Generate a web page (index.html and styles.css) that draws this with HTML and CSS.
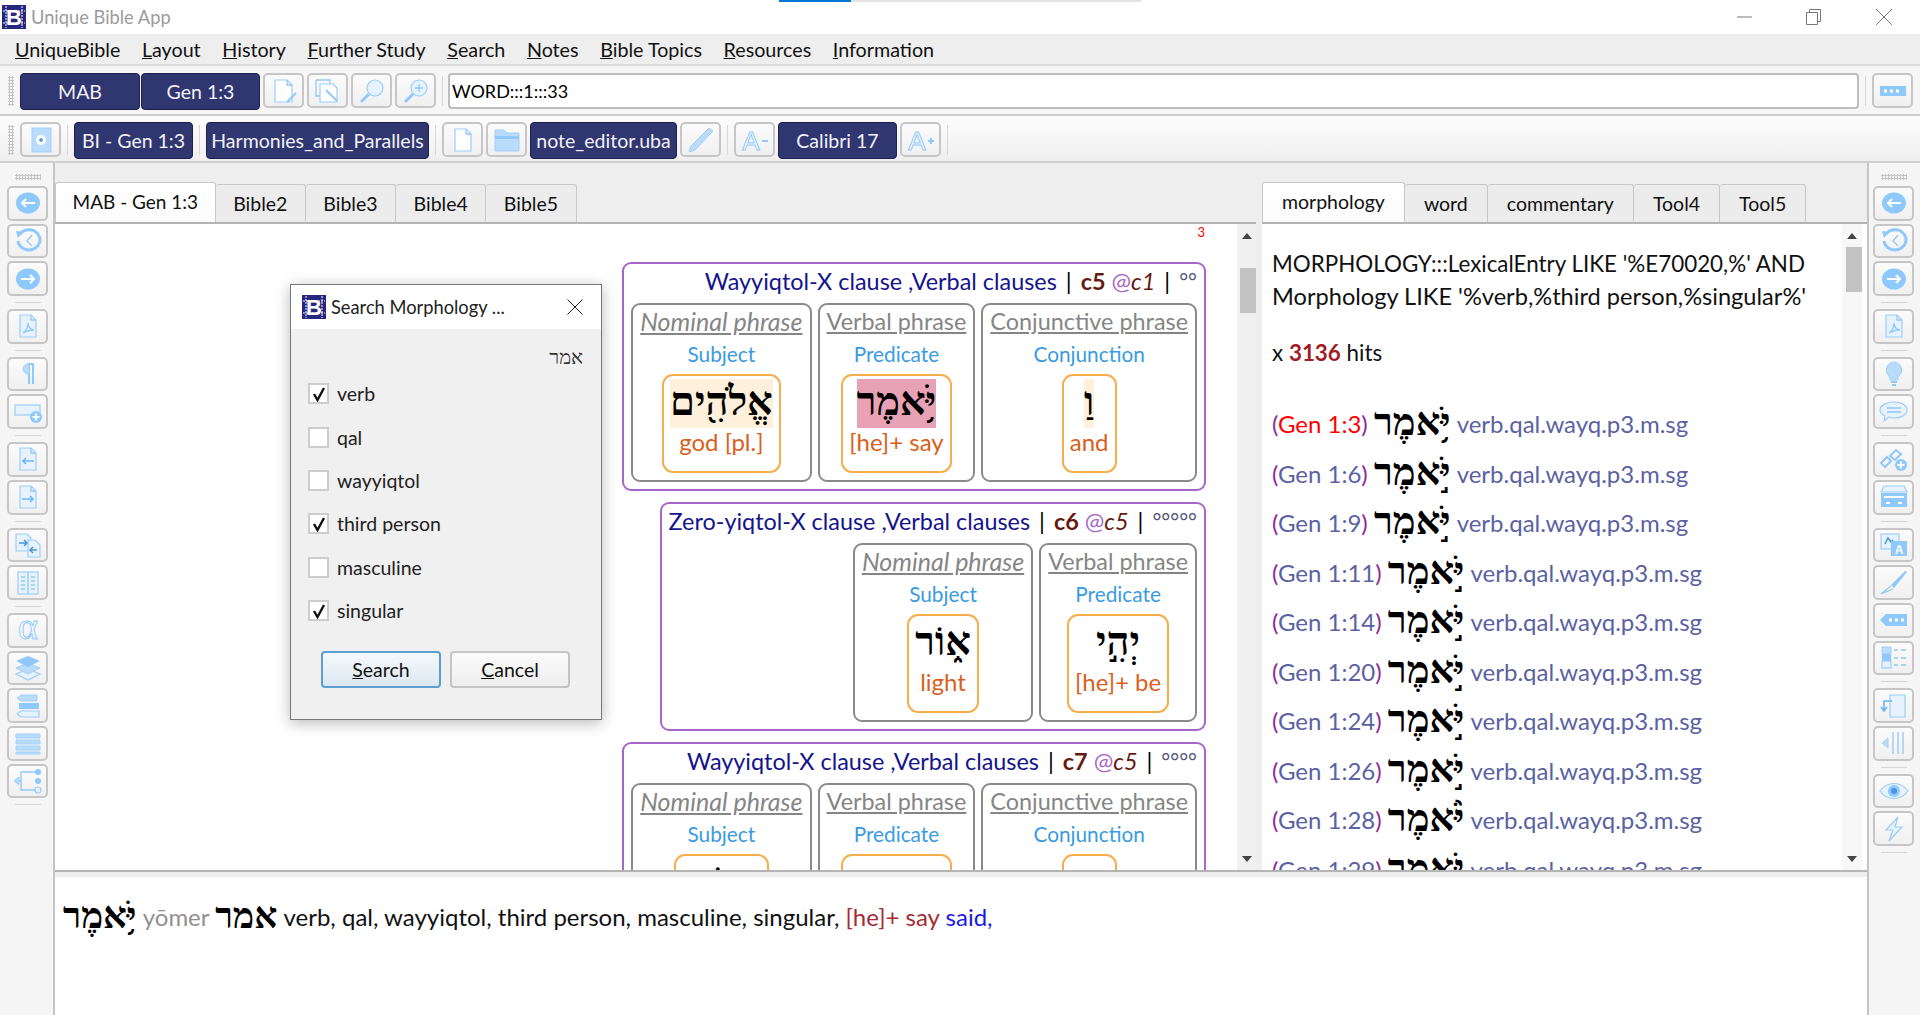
FILE: index.html
```html
<!DOCTYPE html>
<html>
<head>
<meta charset="utf-8">
<title>Unique Bible App</title>
<link rel="stylesheet" href="styles.css">
</head>
<body>

<svg class="defs" width="0" height="0">
  <symbol id="i-back" viewBox="0 0 30 26"><ellipse class="so" cx="15" cy="13" rx="12" ry="10.5"/><path class="wh" d="M22 13H9M13 9l-4 4 4 4"/></symbol>
  <symbol id="i-next" viewBox="0 0 30 26"><ellipse class="so" cx="15" cy="13" rx="12" ry="10.5"/><path class="wh" d="M8 13h13M17 9l4 4-4 4"/></symbol>
  <symbol id="i-hist" viewBox="0 0 30 26"><path class="th" d="M7 6a11 10 0 1 1-2 7"/><path class="so" d="M3 3l7 1-5 6z"/><path class="ln" d="M19 7l-5 6 5 5"/></symbol>
  <symbol id="i-pdf" viewBox="0 0 30 26"><path class="pl" d="M7 2h11l5 5v17H7z"/><path class="ln" d="M18 2v5h5M10 20c3-2 5-6 5-10 0 4 3 7 6 7-4 0-8 1-11 3z"/></symbol>
  <symbol id="i-para" viewBox="0 0 30 26"><path class="th2" d="M14 3h7M16 3v20M20 3v20"/><path class="lt" d="M16 3c-8 0-8 10 0 10z"/></symbol>
  <symbol id="i-boxadd" viewBox="0 0 30 26"><rect class="pl" x="2" y="6" width="25" height="10"/><circle class="so" cx="23" cy="18" r="6"/><path class="wh" d="M19.500 18h7M23 14.500v7"/></symbol>
  <symbol id="i-docback" viewBox="0 0 30 26"><path class="pl" d="M7 2h11l5 5v17H7z"/><path class="ln" d="M18 2v5h5"/><path class="ar" d="M21 15H10M13 12l-3 3 3 3"/></symbol>
  <symbol id="i-docnext" viewBox="0 0 30 26"><path class="pl" d="M7 2h11l5 5v17H7z"/><path class="ln" d="M18 2v5h5"/><path class="ar" d="M9 15h11M17 12l3 3-3 3"/></symbol>
  <symbol id="i-docs" viewBox="0 0 30 26"><path class="pl" d="M3 2h11l4 4v13H3z"/><path class="pl" d="M15 8h7l5 5v12H15z"/><path class="dk" d="M6 11h8M11 8l3 3-3 3M24 18h-7M20 15l-3 3 3 3"/></symbol>
  <symbol id="i-cols" viewBox="0 0 30 26"><rect class="pl" x="5" y="2" width="20" height="22"/><path class="ln" d="M15 2v22M8 7h4M8 11h4M8 15h4M8 19h4M18 7h4M18 11h4M18 15h4M18 19h4"/></symbol>
  <symbol id="i-alpha" viewBox="0 0 30 26"><text class="alpha" x="15" y="22">α</text></symbol>
  <symbol id="i-layers" viewBox="0 0 30 26"><path class="pl" d="M15 14l12 5-12 6-12-6z"/><path class="lt" d="M15 8l12 5-12 6-12-6z"/><path class="so" d="M15 1l12 5-12 6-12-6z"/></symbol>
  <symbol id="i-stack" viewBox="0 0 30 26"><path class="lt" d="M8 2h16v6H8L4 5z"/><path class="so" d="M6 10h20v6H6z"/><path class="pl" d="M8 18h18v6H8l-4-3z"/></symbol>
  <symbol id="i-bars" viewBox="0 0 30 26"><path class="lt" d="M3 4h24v4H3zM3 10h24v4H3zM3 16h24v4H3zM3 22h24v2H3z"/></symbol>
  <symbol id="i-tree" viewBox="0 0 30 26"><path class="ln" d="M10 4H8v18h2M8 4h16M8 22h16M8 13H5"/><path class="lt" d="M1 13l5-4v8z"/><circle class="so" cx="25" cy="4" r="3"/><circle class="so" cx="25" cy="13" r="3"/><circle class="pl" cx="25" cy="22" r="3"/></symbol>
  <symbol id="i-bulb" viewBox="0 0 30 26"><path class="lt" d="M15 1a8 8 0 0 1 5 14c-1 1-1 3-1 4h-8c0-1 0-3-1-4a8 8 0 0 1 5-14z"/><path class="th2" d="M12 21h6M13 24h4"/></symbol>
  <symbol id="i-chat" viewBox="0 0 30 26"><path class="pl" d="M15 3c7 0 13 3 13 8s-6 8-13 8c-2 0-3 0-5-1l-5 4 1-5c-3-1-5-4-5-6 0-5 7-8 14-8z"/><path class="ln" d="M8 9h14M8 13h14"/></symbol>
  <symbol id="i-chain" viewBox="0 0 30 26"><path class="th2" d="M2 17l6-6 4 4-6 6zM11 10l6-6 5 4-6 6z"/><circle class="so" cx="22" cy="19" r="6"/><path class="wh" d="M18.500 19h7M22 15.500v7"/></symbol>
  <symbol id="i-box" viewBox="0 0 30 26"><path class="pl" d="M5 2h20l3 6H2z"/><path class="so" d="M2 9h26v14H2z"/><path class="wh" d="M5 13h20M7 19h4M19 19h4"/></symbol>
  <symbol id="i-pica" viewBox="0 0 30 26"><rect class="pl" x="2" y="2" width="18" height="15"/><path class="dk" d="M6 12l3-6 3 4 2-2"/><rect class="so" x="12" y="9" width="16" height="15"/><text class="label-a" x="20" y="22">A</text></symbol>
  <symbol id="i-scalpel" viewBox="0 0 30 26"><path class="so" d="M28 2l-2-1L12 15l3 3z"/><path class="ln" d="M12 16L2 24l12-5"/></symbol>
  <symbol id="i-tag" viewBox="0 0 30 26"><path class="so" d="M7 7h21v12H7l-6-6z"/><path class="dots" d="M10 13h16"/></symbol>
  <symbol id="i-list" viewBox="0 0 30 26"><rect class="lt" x="3" y="2" width="9" height="7"/><rect class="so" x="3" y="9" width="9" height="7"/><rect class="pl" x="3" y="16" width="9" height="7"/><path class="ln" d="M15 5h4M22 5h5M15 13h4M22 13h5M15 20h4M22 20h5"/></symbol>
  <symbol id="i-ret" viewBox="0 0 30 26"><path class="pl" d="M11 2h15v22H11z"/><path class="ar" d="M13 8H5v9M2 14l3 4 3-4"/></symbol>
  <symbol id="i-vlines" viewBox="0 0 30 26"><path class="ln" d="M14 2v22M19 2v22M24 2v22"/><path class="lt" d="M9 8v10l-6-5z"/></symbol>
  <symbol id="i-eye" viewBox="0 0 30 26"><path class="pl" d="M1 13c7-10 21-10 28 0-7 10-21 10-28 0z"/><circle class="so" cx="15" cy="13" r="6"/><circle class="blue" cx="15" cy="13" r="3"/></symbol>
  <symbol id="i-bolt" viewBox="0 0 30 26"><path class="pl" d="M19 1L7 14h7l-4 11 13-14h-7z"/></symbol>
  <symbol id="i-docedit" viewBox="0 0 30 26"><path class="pl fill-w" d="M6 2h12l5 5v17H6z"/><path class="ln" d="M18 2v5h5"/><path class="th2" d="M27 15l-9 9"/></symbol>
  <symbol id="i-copyedit" viewBox="0 0 30 26"><path class="ln" d="M3 2h14v4M3 2v16h4"/><path class="pl fill-w" d="M7 6h13l4 4v14H7z"/><path class="th2" d="M13 12l11 11"/></symbol>
  <symbol id="i-find" viewBox="0 0 30 26"><circle class="pl" cx="18" cy="10" r="8"/><path class="th" d="M12 16l-8 8"/></symbol>
  <symbol id="i-findplus" viewBox="0 0 30 26"><circle class="pl" cx="18" cy="10" r="8"/><path class="th" d="M12 16l-8 8"/><path class="ln" d="M14 10h8M18 6v8"/></symbol>
  <symbol id="i-term" viewBox="0 0 30 26"><rect class="so" x="2" y="8" width="26" height="10"/><path class="dots" d="M6 13h18"/></symbol>
  <symbol id="i-bookadd" viewBox="0 0 30 26"><rect class="lt" x="6" y="1" width="19" height="24"/><circle class="white" cx="15" cy="13" r="5"/><path class="dk" d="M13 13h4M15 11v4"/></symbol>
  <symbol id="i-doc" viewBox="0 0 30 26"><path class="pl fill-w" d="M7 2h11l5 5v17H7z"/><path class="ln" d="M18 2v5h5"/></symbol>
  <symbol id="i-folder" viewBox="0 0 30 26"><path class="lt" d="M3 3h9l3 3h12v18H3z"/><path class="so" d="M3 9h24v3H3z"/></symbol>
  <symbol id="i-pen" viewBox="0 0 30 26"><path class="lt" d="M23 1l4 3L9 23l-6 2 2-6z"/></symbol>
  <symbol id="i-aminus" viewBox="0 0 30 26"><text class="font-a" x="11" y="23">A</text><path class="th2" d="M22 14h6"/></symbol>
  <symbol id="i-aplus" viewBox="0 0 30 26"><text class="font-a" x="11" y="23">A</text><path class="th2" d="M22 14h6M25 11v6"/></symbol>
  <symbol id="i-logo" viewBox="0 0 24 24"><rect class="logo-bg" width="24" height="24"/><path class="logo-ln" d="M4 1v22M20 1v22M1 6h22M1 18h22"/><text class="logo-b" x="12" y="20">B</text></symbol>
</svg>

<div class="topstrip"><span></span></div>

<div class="titlebar">
  <svg class="logo"><use href="#i-logo"/></svg>
  <span class="apptitle">Unique Bible App</span>
  <div class="winbtns">
    <svg width="16" height="16" viewBox="0 0 16 16"><path d="M0 8h15"/></svg>
    <svg width="16" height="16" viewBox="0 0 16 16"><path d="M.5 3.500h11v12H.5zM3.500 3.500V.500h11v12h-3"/></svg>
    <svg width="18" height="16" viewBox="0 0 18 16"><path d="M1 0l16 16M17 0L1 16"/></svg>
  </div>
</div>

<div class="menubar">
  <span><u>U</u>niqueBible</span>
  <span><u>L</u>ayout</span>
  <span><u>H</u>istory</span>
  <span><u>F</u>urther Study</span>
  <span><u>S</u>earch</span>
  <span><u>N</u>otes</span>
  <span><u>B</u>ible Topics</span>
  <span><u>R</u>esources</span>
  <span><u>I</u>nformation</span>
</div>

<div class="toolbar tb-one">
  <div class="grip"></div>
  <div class="dark w-mab">MAB</div>
  <div class="dark w-ref tight">Gen 1:3</div>
  <div class="tbtn"><svg class="ic"><use href="#i-docedit"/></svg></div>
  <div class="tbtn"><svg class="ic"><use href="#i-copyedit"/></svg></div>
  <div class="tbtn"><svg class="ic"><use href="#i-find"/></svg></div>
  <div class="tbtn"><svg class="ic"><use href="#i-findplus"/></svg></div>
  <div class="tsep"></div>
  <div class="cmdline">WORD:::1:::33</div>
  <div class="tsep"></div>
  <div class="tbtn"><svg class="ic"><use href="#i-term"/></svg></div>
</div>

<div class="toolbar tb-two">
  <div class="grip"></div>
  <div class="tbtn"><svg class="ic"><use href="#i-bookadd"/></svg></div>
  <div class="tsep"></div>
  <div class="dark w-ref">BI - Gen 1:3</div>
  <div class="tsep"></div>
  <div class="dark w-harm">Harmonies_and_Parallels</div>
  <div class="tsep"></div>
  <div class="tbtn"><svg class="ic"><use href="#i-doc"/></svg></div>
  <div class="tbtn"><svg class="ic"><use href="#i-folder"/></svg></div>
  <div class="dark w-note">note_editor.uba</div>
  <div class="tbtn"><svg class="ic"><use href="#i-pen"/></svg></div>
  <div class="tsep"></div>
  <div class="tbtn"><svg class="ic"><use href="#i-aminus"/></svg></div>
  <div class="dark w-ref">Calibri 17</div>
  <div class="tbtn"><svg class="ic"><use href="#i-aplus"/></svg></div>
  <div class="tsep"></div>
</div>

<div class="workspace">

  <div class="sidebar side-left">
    <div class="vgrip"></div>
    <div class="sbtn"><svg class="ic"><use href="#i-back"/></svg></div>
    <div class="sbtn"><svg class="ic"><use href="#i-hist"/></svg></div>
    <div class="sbtn"><svg class="ic"><use href="#i-next"/></svg></div>
    <div class="ssep"></div>
    <div class="sbtn"><svg class="ic"><use href="#i-pdf"/></svg></div>
    <div class="ssep"></div>
    <div class="sbtn"><svg class="ic"><use href="#i-para"/></svg></div>
    <div class="sbtn"><svg class="ic"><use href="#i-boxadd"/></svg></div>
    <div class="ssep"></div>
    <div class="sbtn"><svg class="ic"><use href="#i-docback"/></svg></div>
    <div class="sbtn"><svg class="ic"><use href="#i-docnext"/></svg></div>
    <div class="ssep"></div>
    <div class="sbtn"><svg class="ic"><use href="#i-docs"/></svg></div>
    <div class="sbtn"><svg class="ic"><use href="#i-cols"/></svg></div>
    <div class="ssep"></div>
    <div class="sbtn"><svg class="ic"><use href="#i-alpha"/></svg></div>
    <div class="sbtn"><svg class="ic"><use href="#i-layers"/></svg></div>
    <div class="sbtn"><svg class="ic"><use href="#i-stack"/></svg></div>
    <div class="sbtn"><svg class="ic"><use href="#i-bars"/></svg></div>
    <div class="sbtn"><svg class="ic"><use href="#i-tree"/></svg></div>
    <div class="ssep"></div>
  </div>

  <div class="center">
    <div class="panes">

      <div class="tabwidget tw-left">
        <div class="tabs">
          <div class="tab active">MAB - Gen 1:3</div>
          <div class="tab">Bible2</div>
          <div class="tab">Bible3</div>
          <div class="tab">Bible4</div>
          <div class="tab">Bible5</div>
        </div>
        <div class="pane">
          <div class="scrollarea bible">
            <div class="versenum">3</div>

            <div class="clause">
              <div class="ctitle">Wayyiqtol-X clause ,Verbal clauses <span class="bar">|</span> <b>c5</b> <span class="at">@</span><i>c1</i> <span class="bar">|</span> <sup>°°</sup></div>
              <div class="phrases">
                <div class="phrase">
                  <div class="pname nom">Nominal phrase</div>
                  <div class="func">Subject</div>
                  <div class="word"><div class="heb hl" dir="rtl">אֱלֹהִ֖ים</div><div class="gloss">god [pl.]</div></div>
                </div>
                <div class="phrase">
                  <div class="pname">Verbal phrase</div>
                  <div class="func">Predicate</div>
                  <div class="word"><div class="heb hl-pink" dir="rtl">יֹּ֥אמֶר</div><div class="gloss">[he]+ say</div></div>
                </div>
                <div class="phrase">
                  <div class="pname">Conjunctive phrase</div>
                  <div class="func">Conjunction</div>
                  <div class="word"><div class="heb hl" dir="rtl">וַ</div><div class="gloss">and</div></div>
                </div>
              </div>
            </div>

            <div class="clause">
              <div class="ctitle">Zero-yiqtol-X clause ,Verbal clauses <span class="bar">|</span> <b>c6</b> <span class="at">@</span><i>c5</i> <span class="bar">|</span> <sup>°°°°°</sup></div>
              <div class="phrases">
                <div class="phrase">
                  <div class="pname nom">Nominal phrase</div>
                  <div class="func">Subject</div>
                  <div class="word"><div class="heb" dir="rtl">א֑וֹר</div><div class="gloss">light</div></div>
                </div>
                <div class="phrase">
                  <div class="pname">Verbal phrase</div>
                  <div class="func">Predicate</div>
                  <div class="word"><div class="heb" dir="rtl">יְהִ֣י</div><div class="gloss">[he]+ be</div></div>
                </div>
              </div>
            </div>

            <div class="clause">
              <div class="ctitle">Wayyiqtol-X clause ,Verbal clauses <span class="bar">|</span> <b>c7</b> <span class="at">@</span><i>c5</i> <span class="bar">|</span> <sup>°°°°</sup></div>
              <div class="phrases">
                <div class="phrase">
                  <div class="pname nom">Nominal phrase</div>
                  <div class="func">Subject</div>
                  <div class="word"><div class="heb" dir="rtl">אוֹר</div><div class="gloss">the day</div></div>
                </div>
                <div class="phrase">
                  <div class="pname">Verbal phrase</div>
                  <div class="func">Predicate</div>
                  <div class="word"><div class="heb" dir="rtl">רְא</div><div class="gloss">[he]+ see</div></div>
                </div>
                <div class="phrase">
                  <div class="pname">Conjunctive phrase</div>
                  <div class="func">Conjunction</div>
                  <div class="word"><div class="heb" dir="rtl">וַ</div><div class="gloss">and</div></div>
                </div>
              </div>
            </div>
          </div>
          <div class="vscroll thumb-left"><span class="up"></span><span class="thumb"></span><span class="down"></span></div>
        </div>
      </div>

      <div class="tabwidget tw-right">
        <div class="tabs">
          <div class="tab active">morphology</div>
          <div class="tab">word</div>
          <div class="tab">commentary</div>
          <div class="tab">Tool4</div>
          <div class="tab">Tool5</div>
        </div>
        <div class="pane">
          <div class="scrollarea results">
            <p class="query">MORPHOLOGY:::LexicalEntry LIKE '%E70020,%' AND<br><span class="q2">Morphology LIKE '%verb,%third person,%singular%'</span></p>
            <p class="count">x <b>3136</b> hits</p>
            <div class="hit"><span class="paren">(</span><span class="ref current">Gen 1:3</span><span class="paren">)</span> <span class="hheb" dir="rtl">יֹּ֥אמֶר</span> <span class="ref">verb.qal.wayq.p3.m.sg</span></div>
            <div class="hit"><span class="paren">(</span><span class="ref">Gen 1:6</span><span class="paren">)</span> <span class="hheb" dir="rtl">יֹּ֣אמֶר</span> <span class="ref">verb.qal.wayq.p3.m.sg</span></div>
            <div class="hit"><span class="paren">(</span><span class="ref">Gen 1:9</span><span class="paren">)</span> <span class="hheb" dir="rtl">יֹּ֣אמֶר</span> <span class="ref">verb.qal.wayq.p3.m.sg</span></div>
            <div class="hit"><span class="paren">(</span><span class="ref">Gen 1:11</span><span class="paren">)</span> <span class="hheb" dir="rtl">יֹּ֣אמֶר</span> <span class="ref">verb.qal.wayq.p3.m.sg</span></div>
            <div class="hit"><span class="paren">(</span><span class="ref">Gen 1:14</span><span class="paren">)</span> <span class="hheb" dir="rtl">יֹּ֣אמֶר</span> <span class="ref">verb.qal.wayq.p3.m.sg</span></div>
            <div class="hit"><span class="paren">(</span><span class="ref">Gen 1:20</span><span class="paren">)</span> <span class="hheb" dir="rtl">יֹּ֣אמֶר</span> <span class="ref">verb.qal.wayq.p3.m.sg</span></div>
            <div class="hit"><span class="paren">(</span><span class="ref">Gen 1:24</span><span class="paren">)</span> <span class="hheb" dir="rtl">יֹּ֣אמֶר</span> <span class="ref">verb.qal.wayq.p3.m.sg</span></div>
            <div class="hit"><span class="paren">(</span><span class="ref">Gen 1:26</span><span class="paren">)</span> <span class="hheb" dir="rtl">יֹּ֣אמֶר</span> <span class="ref">verb.qal.wayq.p3.m.sg</span></div>
            <div class="hit"><span class="paren">(</span><span class="ref">Gen 1:28</span><span class="paren">)</span> <span class="hheb" dir="rtl">יֹּ֨אמֶר</span> <span class="ref">verb.qal.wayq.p3.m.sg</span></div>
            <div class="hit"><span class="paren">(</span><span class="ref">Gen 1:29</span><span class="paren">)</span> <span class="hheb" dir="rtl">יֹּ֣אמֶר</span> <span class="ref">verb.qal.wayq.p3.m.sg</span></div>
          </div>
          <div class="vscroll thumb-right"><span class="up"></span><span class="thumb"></span><span class="down"></span></div>
        </div>
      </div>

    </div>

    <div class="infopane">
      <span class="hheb" dir="rtl">יֹּ֥אמֶר</span> <span class="translit">yōmer</span> <span class="hheb lex" dir="rtl">אמר</span> verb, qal, wayyiqtol, third person, masculine, singular, <span class="sense">[he]+ say</span> <span class="said">said,</span>
    </div>
  </div>

  <div class="sidebar side-right">
    <div class="vgrip"></div>
    <div class="sbtn"><svg class="ic"><use href="#i-back"/></svg></div>
    <div class="sbtn"><svg class="ic"><use href="#i-hist"/></svg></div>
    <div class="sbtn"><svg class="ic"><use href="#i-next"/></svg></div>
    <div class="ssep"></div>
    <div class="sbtn"><svg class="ic"><use href="#i-pdf"/></svg></div>
    <div class="ssep"></div>
    <div class="sbtn"><svg class="ic"><use href="#i-bulb"/></svg></div>
    <div class="sbtn"><svg class="ic"><use href="#i-chat"/></svg></div>
    <div class="ssep"></div>
    <div class="sbtn"><svg class="ic"><use href="#i-chain"/></svg></div>
    <div class="sbtn"><svg class="ic"><use href="#i-box"/></svg></div>
    <div class="ssep"></div>
    <div class="sbtn"><svg class="ic"><use href="#i-pica"/></svg></div>
    <div class="sbtn"><svg class="ic"><use href="#i-scalpel"/></svg></div>
    <div class="sbtn"><svg class="ic"><use href="#i-tag"/></svg></div>
    <div class="sbtn"><svg class="ic"><use href="#i-list"/></svg></div>
    <div class="ssep"></div>
    <div class="sbtn"><svg class="ic"><use href="#i-ret"/></svg></div>
    <div class="sbtn"><svg class="ic"><use href="#i-vlines"/></svg></div>
    <div class="ssep"></div>
    <div class="sbtn"><svg class="ic"><use href="#i-eye"/></svg></div>
    <div class="sbtn"><svg class="ic"><use href="#i-bolt"/></svg></div>
    <div class="ssep"></div>
  </div>
</div>

<div class="dialog">
  <div class="dlg-title">
    <svg class="logo"><use href="#i-logo"/></svg>
    <span>Search Morphology ...</span>
    <svg class="dlg-close" width="16" height="16" viewBox="0 0 16 16"><path d="M.5.500l15 15M15.500.500l-15 15"/></svg>
  </div>
  <div class="dlg-body">
    <div class="lexeme" dir="rtl">אמר</div>
    <div class="check on"><span class="box"><svg width="16" height="16" viewBox="0 0 16 16"><path d="M3 8l3.500 6L13 2"/></svg></span>verb</div>
    <div class="check"><span class="box"></span>qal</div>
    <div class="check"><span class="box"></span>wayyiqtol</div>
    <div class="check on"><span class="box"><svg width="16" height="16" viewBox="0 0 16 16"><path d="M3 8l3.500 6L13 2"/></svg></span>third person</div>
    <div class="check"><span class="box"></span>masculine</div>
    <div class="check on"><span class="box"><svg width="16" height="16" viewBox="0 0 16 16"><path d="M3 8l3.500 6L13 2"/></svg></span>singular</div>
    <div class="dlg-btns">
      <div class="pbtn default"><u>S</u>earch</div>
      <div class="pbtn"><u>C</u>ancel</div>
    </div>
  </div>
</div>

</body>
</html>
```

FILE: styles.css
```css
* {
  box-sizing: border-box;
}

html, body {
  margin: 0;
  height: 1015px;
  overflow: hidden;
}

body {
  display: flex;
  flex-direction: column;
  position: relative;
  font-family: "Lato", "Liberation Sans", sans-serif;
  font-size: 19.5px;
  color: #111;
  background: #eee;
}

.defs {
  display: none;
}

/* icon paint */
.so { fill: #8fc8fb; }
.lt { fill: #b9dcfb; stroke: #a4d0f8; stroke-width: 1; }
.pl { fill: #e6f3fe; stroke: #9ccdf7; stroke-width: 1.2; }
.fill-w { fill: #fff; }
.ln { fill: none; stroke: #93c8f6; stroke-width: 1.3; }
.th { fill: none; stroke: #8fc8fb; stroke-width: 3; }
.th2 { fill: none; stroke: #8fc8fb; stroke-width: 2; }
.ar { fill: none; stroke: #6fb4f2; stroke-width: 1.6; }
.dk { fill: none; stroke: #4f97dc; stroke-width: 1.6; }
.wh { fill: none; stroke: #fff; stroke-width: 2; }
.white { fill: #fff; }
.blue { fill: #4f97dc; }
.dots { fill: none; stroke: #fff; stroke-width: 3; stroke-dasharray: 3 3; }
.alpha, .font-a {
  font-family: "Liberation Serif", serif;
  fill: #fff;
  stroke: #8fc8fb;
  stroke-width: 1;
  text-anchor: middle;
}
.alpha { font-size: 38px; }
.font-a { font-family: "Liberation Sans", sans-serif; font-size: 26px; }
.label-a {
  font-family: "Liberation Sans", sans-serif;
  font-size: 12px;
  font-weight: bold;
  fill: #fff;
  text-anchor: middle;
}
.logo-bg { fill: #27277f; }
.logo-ln { stroke: #fff; stroke-width: 1; stroke-dasharray: 2 1; fill: none; }
.logo-b {
  font-family: "Liberation Sans", sans-serif;
  font-size: 22px;
  font-weight: bold;
  fill: #fff;
  text-anchor: middle;
}

.topstrip {
  position: absolute;
  left: 779px;
  top: 0;
  width: 362px;
  height: 2px;
  background: #e2e2e2;
}

.topstrip span {
  display: block;
  width: 72px;
  height: 2px;
  background: #0078d7;
}

/* title + menu */
.titlebar {
  height: 34px;
  flex: none;
  display: flex;
  align-items: center;
  background: #fff;
  padding-left: 2px;
}

.logo {
  width: 24px;
  height: 24px;
  flex: none;
}

.apptitle {
  margin-left: 5px;
  font-size: 18.3px;
  color: #9b9b9b;
}

.winbtns {
  margin-left: auto;
  display: flex;
  align-items: center;
  gap: 53px;
  padding-right: 27px;
}

.winbtns path, .dlg-close path {
  fill: none;
  stroke: #777;
  stroke-width: 1;
}

.menubar {
  height: 32px;
  flex: none;
  display: flex;
  align-items: center;
  gap: 21.6px;
  padding-left: 15px;
  font-size: 19.7px;
  background: #eee;
  border-bottom: 2px solid #dcdcdc;
}

/* toolbars */
.toolbar {
  flex: none;
  display: flex;
  align-items: flex-start;
  gap: 3px;
  padding: 7px 7px 0 8px;
  border-bottom: 2px solid #cfcfcf;
}

.tb-one {
  height: 50px;
  background: #f6f6f6;
}

.tb-two {
  height: 47px;
  padding-top: 6px;
  background: linear-gradient(#fdfdfd, #efefef);
}

.grip {
  width: 6px;
  height: 30px;
  margin: 3px 3px 0 0;
  background: radial-gradient(circle, #c4c4c4 1px, transparent 1.2px) 0 0 / 3px 3px;
}

.dark {
  height: 37px;
  flex: none;
  display: flex;
  align-items: center;
  justify-content: center;
  color: #f2f2f8;
  background: #2f3670;
  border: 1px solid #1c2150;
  border-radius: 4px;
}

.w-mab { width: 120px; }
.w-ref { width: 119px; }
.w-harm { width: 223px; }
.w-note { width: 147px; }
.tight { margin-left: -2px; }

.tbtn, .sbtn {
  flex: none;
  display: flex;
  align-items: center;
  justify-content: center;
  width: 41px;
  background: linear-gradient(#fbfbfb, #f0f0f0);
  border: 2px solid #c6c6c6;
  border-radius: 5px;
}

.tbtn { height: 35px; }
.sbtn { height: 34.7px; }

.ic {
  width: 30px;
  height: 26px;
}

.tsep {
  width: 1px;
  height: 30px;
  flex: none;
  margin: 3px 3px 0;
  background: #d8d8d8;
}

.cmdline {
  flex: 1;
  height: 36px;
  margin-left: -1px;
  padding-left: 2px;
  font-size: 18px;
  line-height: 33px;
  color: #000;
  background: #fff;
  border: 2px solid #bdbdbd;
  border-radius: 4px;
}

/* main area */
.workspace {
  flex: 1;
  min-height: 0;
  display: flex;
}

.sidebar {
  flex: none;
  width: 55px;
  display: flex;
  flex-direction: column;
  gap: 3px;
  padding-top: 11px;
  background: #f5f5f5;
}

.side-left {
  padding-left: 7px;
  border-right: 2px solid #c4c4c4;
}

.side-right {
  width: 53px;
  padding-left: 4px;
  border-left: 2px solid #c4c4c4;
}

.vgrip {
  width: 26px;
  height: 6px;
  flex: none;
  margin: 0 0 3px 8px;
  background: radial-gradient(circle, #c4c4c4 1px, transparent 1.2px) 0 0 / 3px 3px;
}

.ssep {
  height: 7px;
  width: 26px;
  flex: none;
  margin-left: 8px;
  background: linear-gradient(#d4d4d4, #d4d4d4) center / 100% 1px no-repeat;
}

.center {
  flex: 1;
  min-width: 0;
  display: flex;
  flex-direction: column;
}

.panes {
  height: 709px;
  flex: none;
  display: flex;
  gap: 6px;
  border-bottom: 2px solid #b4b4b4;
}

.tabwidget {
  display: flex;
  flex-direction: column;
  min-height: 0;
}

.tw-left { width: 1201px; }
.tw-right { flex: 1; min-width: 0; }

.tabs {
  height: 59px;
  flex: none;
  display: flex;
  align-items: flex-end;
}

.tab {
  height: 38px;
  padding: 0 17.500px;
  line-height: 38px;
  background: #ececec;
  border: 1px solid #c8c8c8;
  border-bottom: 0;
  border-left: 0;
  border-radius: 3px 3px 0 0;
}

.tw-right .tab {
  padding: 0 19px;
}

.tab.active {
  height: 40px;
  padding: 0 16.500px;
  font-size: 19px;
  line-height: 38px;
  background: linear-gradient(#fff, #fcfcfc);
  border-left: 1px solid #c8c8c8;
}

.tw-right .tab.active {
  padding: 0 19px;
  font-size: 19.5px;
}

.pane {
  flex: 1;
  min-height: 0;
  display: flex;
  background: #fff;
  border-top: 2px solid #b4b4b4;
  overflow: hidden;
}

.scrollarea {
  flex: 1;
  min-width: 0;
  overflow: hidden;
}

.vscroll {
  flex: none;
  position: relative;
  width: 19px;
  background: #f0f0f0;
}

.thumb-right {
  width: 20px;
  margin-right: 5px;
  background: #f7f7f7;
}

.vscroll .thumb {
  position: absolute;
  right: 0;
  top: 44px;
  width: 16px;
  height: 45px;
  background: #c2c2c2;
}

.thumb-right .thumb {
  top: 23px;
}

.vscroll .up, .vscroll .down {
  position: absolute;
  left: 5px;
  border-left: 5px solid transparent;
  border-right: 5px solid transparent;
}

.vscroll .up {
  top: 9px;
  border-bottom: 6px solid #444;
}

.vscroll .down {
  top: 632px;
  border-top: 6px solid #444;
}

/* clause cards */
.bible {
  display: flex;
  flex-direction: column;
  align-items: flex-end;
  gap: 11px;
  padding-right: 31px;
}

.versenum {
  flex: none;
  height: 38px;
  width: 100%;
  margin-bottom: -11px;
  padding-right: 1px;
  text-align: right;
  font-size: 13px;
  line-height: 17px;
  color: #f00;
}

.clause {
  flex: none;
  height: 229px;
  padding: 0 7px;
  border: 2px solid #a866c8;
  border-radius: 9px;
}

.ctitle {
  height: 39px;
  text-align: right;
  white-space: nowrap;
  font-size: 23.400px;
  line-height: 34px;
  color: #14148c;
}

.ctitle .bar {
  padding: 0 3px;
  color: #000;
}
.ctitle b, .ctitle i { color: #651a10; }
.ctitle .at { color: #a866c8; }

.ctitle sup {
  font-size: 21.500px;
  line-height: 0;
  vertical-align: 1px;
  color: #557;
}

.phrases {
  display: flex;
  justify-content: flex-end;
  gap: 6px;
}

.phrase {
  height: 179px;
  padding: 0 7px;
  display: flex;
  flex-direction: column;
  align-items: center;
  border: 2px solid #8a8a8a;
  border-radius: 9px;
}

.pname {
  height: 34px;
  white-space: nowrap;
  font-size: 23.400px;
  line-height: 32px;
  color: #858585;
  text-decoration: underline;
}

.pname.nom {
  font-size: 25px;
  font-style: italic;
}

.func {
  height: 30px;
  font-size: 20.800px;
  line-height: 30px;
  color: #3a9be3;
}

.word {
  margin-top: 5px;
  height: 99px;
  padding: 3px 6px 0;
  display: flex;
  flex-direction: column;
  align-items: center;
  border: 2px solid #f7ad4b;
  border-radius: 11px;
}

.heb, .hheb, .lexeme {
  font-family: "Liberation Serif", "DejaVu Sans", serif;
  font-weight: bold;
  color: #000;
}

.heb {
  height: 49px;
  font-size: 40px;
  line-height: 46px;
}

.hl { background: #fef0da; }
.hl-pink { background: #e8a1b5; }

.gloss {
  font-size: 24px;
  line-height: 28px;
  white-space: nowrap;
  color: #d9601a;
}

/* search results */
.results {
  padding: 24px 0 0 10px;
  font-size: 22.400px;
}

.query {
  margin: 0 0 24px;
  line-height: 32px;
  white-space: nowrap;
}

.q2 { font-size: 23.600px; }

.count {
  margin: 0 0 30px;
  line-height: 32px;
}

.count b { color: #a11d26; }

.hit {
  height: 49.500px;
  font-size: 24px;
  line-height: 49.500px;
  white-space: nowrap;
}

.ref { color: #5a62a3; }
.ref.current { color: #f00; }
.paren { color: #8e2a97; }

.hheb {
  font-size: 38.500px;
  line-height: 30px;
  vertical-align: -2px;
}

/* bottom pane */
.infopane {
  flex: 1;
  margin-top: 5px;
  padding: 16px 0 0 8px;
  background: #fff;
  font-size: 24px;
  line-height: 48px;
  white-space: nowrap;
}

.infopane .hheb { font-size: 37px; }
.infopane .lex { font-size: 36px; }

.translit { color: #909090; }
.sense { color: #a62b32; }
.said { color: #1a1ae6; }

/* dialog */
.dialog {
  position: absolute;
  left: 290px;
  top: 284px;
  width: 312px;
  height: 436px;
  background: #f0f0f0;
  border: 1px solid #777;
  box-shadow: 0 3px 14px rgba(0, 0, 0, 0.28);
}

.dlg-title {
  height: 44px;
  display: flex;
  align-items: center;
  gap: 5px;
  padding-left: 11px;
  font-size: 18.300px;
  background: #fff;
  color: #222;
}

.dlg-close {
  margin-left: auto;
  margin-right: 18px;
}

.dlg-close path { stroke: #222; }

.dlg-body {
  padding: 0 0 0 17px;
}

.lexeme {
  height: 43px;
  padding: 15px 0 0 0;
  margin-right: 18px;
  font-weight: normal;
  font-size: 20px;
  line-height: 26px;
  color: #333;
}

.check {
  height: 43.400px;
  display: flex;
  align-items: center;
  gap: 8px;
  color: #222;
}

.box {
  width: 21px;
  height: 21px;
  display: flex;
  align-items: center;
  justify-content: center;
  background: #fff;
  border: 2px solid #cdcdcd;
}

.box path {
  fill: none;
  stroke: #111;
  stroke-width: 2.400;
}

.dlg-btns {
  display: flex;
  gap: 9px;
  margin: 19px 0 0 13px;
}

.pbtn {
  width: 120px;
  height: 37px;
  text-align: center;
  line-height: 33px;
  background: linear-gradient(#fbfbfb, #eeeeee);
  border: 2px solid #c4c4c4;
  border-radius: 4px;
}

.pbtn.default {
  background: linear-gradient(#f5f9fc, #dbe7f1);
  border-color: #5a9fcf;
}
```
